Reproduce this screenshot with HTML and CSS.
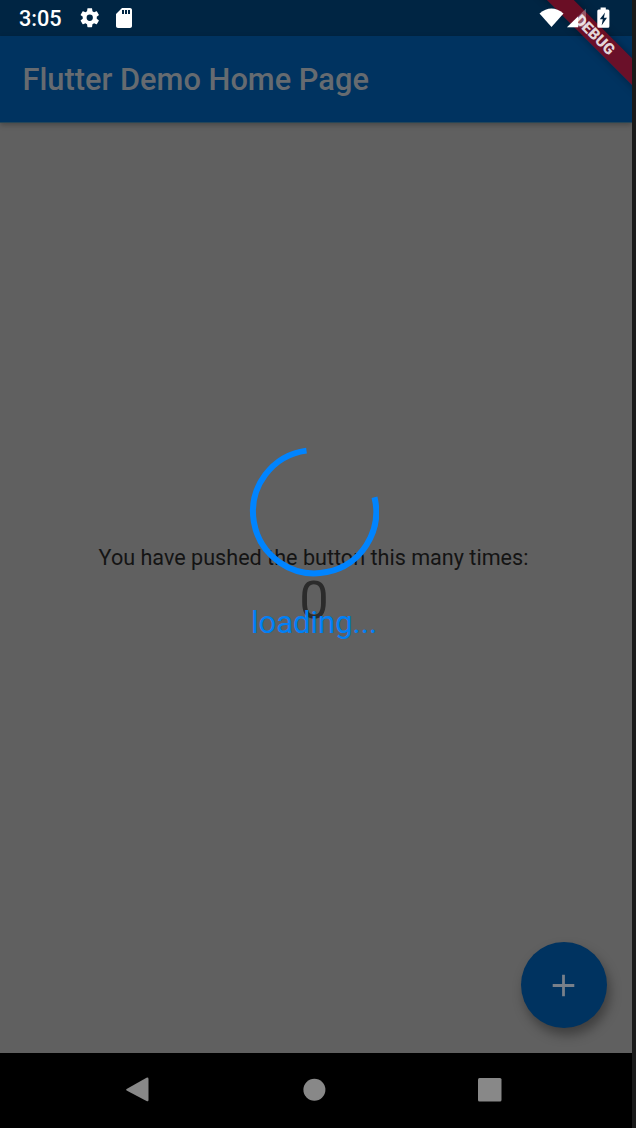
FILE: index.html
```html
<!DOCTYPE html>
<html lang="en">
<head>
<meta charset="utf-8">
<title>Flutter Demo Home Page</title>
<link rel="stylesheet" href="styles.css">
</head>
<body>
<div class="device">
  <div class="status">
    <span class="clock">3:05</span>
    <svg class="gear" viewBox="0 0 24 24"><path d="M19.14 12.94c.04-.3.06-.61.06-.94s-.02-.64-.07-.94l2.03-1.58c.18-.14.23-.41.12-.61l-1.92-3.32c-.12-.22-.37-.29-.59-.22l-2.39.96c-.5-.38-1.03-.7-1.62-.94l-.36-2.54c-.04-.24-.24-.41-.48-.41h-3.84c-.24 0-.43.17-.47.41l-.36 2.54c-.59.24-1.13.57-1.62.94l-2.39-.96c-.22-.08-.47 0-.59.22L2.74 8.87c-.12.21-.08.47.12.61l2.03 1.58c-.05.3-.09.63-.09.94s.02.64.07.94l-2.03 1.58c-.18.14-.23.41-.12.61l1.92 3.32c.12.22.37.29.59.22l2.39-.96c.5.38 1.03.7 1.62.94l.36 2.54c.05.24.24.41.48.41h3.84c.24 0 .44-.17.47-.41l.36-2.54c.59-.24 1.13-.56 1.62-.94l2.39.96c.22.08.47 0 .59-.22l1.92-3.32c.12-.22.07-.47-.12-.61zM12 15.2A3.2 3.2 0 1 1 12 8.800a3.2 3.2 0 0 1 0 6.400z"/></svg>
    <svg class="card" viewBox="0 0 24 24"><path d="M18 2h-8L4.020 8 4 20c0 1.100.9 2 2 2h12c1.100 0 2-.9 2-2V4c0-1.100-.9-2-2-2zm-6 6h-2V4h2zm3 0h-2V4h2zm3 0h-2V4h2z"/></svg>
    <svg class="signals" viewBox="536 0 80 36">
      <path d="M539.500 13.400Q551.500 3.400 563.500 13.400L551.500 27z"/>
      <path class="dim" d="M567 27.200L586 8.500V27.200z"/>
      <path d="M567 27.200L578 16.400V27.200z"/>
      <path fill-rule="evenodd" d="M600.600 9.500V7.500H605.800V9.500H608Q609.400 9.500 609.400 11V26.200Q609.400 27.800 608 27.800H598.800Q597.300 27.800 597.300 26.200V11Q597.300 9.500 598.800 9.500zM605 12.500L599.800 19.300H602.800L601.600 25.500L607 17.800H603.900z"/>
    </svg>
  </div>
  <header class="appbar"><h1>Flutter Demo Home Page</h1></header>
  <main class="content">
    <p class="message">You have pushed the button this many times:</p>
    <p class="count">0</p>
    <button class="fab" aria-label="Increment"><svg viewBox="0 0 24 24"><path d="M19 12.900h-6.100V19h-1.800v-6.100H5v-1.800h6.100V5h1.800v6.100H19z"/></svg></button>
    <div class="loader">
      <svg class="spinner" viewBox="0 0 130 130"><path d="M57.500 3.600A61.600 61.600 0 1 0 125.500 50.300"/></svg>
      <span class="loading">loading...</span>
    </div>
  </main>
  <nav class="navbar">
    <svg viewBox="0 0 26 26"><path d="M1.600 12L21.500 .7Q23.500 0 23.500 2V23Q23.500 25 21.500 24L1.600 13.500Q.5 12.700 1.600 12z"/></svg>
    <svg viewBox="0 0 26 26"><circle cx="13.400" cy="12.700" r="11"/></svg>
    <svg viewBox="0 0 26 26"><rect x="1" y="1" width="23.500" height="23.500" rx="1.500"/></svg>
  </nav>
  <div class="banner"><span>DEBUG</span></div>
</div>
</body>
</html>
```
FILE: styles.css
```css
body {
  margin: 0;
  background: #1a1a1a;
  font-family: Roboto, sans-serif;
}
.device {
  position: relative;
  width: 632px;
  height: 1128px;
  display: flex;
  flex-direction: column;
  overflow: hidden;
  background: #606060;
}
.status {
  height: 36px;
  box-sizing: border-box;
  padding: 0 16px 0 19px;
  display: flex;
  align-items: center;
  background: #002543;
  color: #fff;
  fill: #fff;
}
.clock {
  width: 59px;
  font-size: 21.700px;
  font-weight: 500;
  line-height: 36px;
  padding-top: 1px;
  box-sizing: border-box;
}
.gear { width: 23.500px; height: 23.500px; }
.card { width: 24px; height: 24px; margin-left: 10.500px; }
.signals {
  position: relative;
  z-index: 3;
  width: 80px;
  height: 36px;
  margin-left: auto;
}
.dim { opacity: .3; }
.appbar {
  height: 87px;
  box-sizing: border-box;
  padding: 2px 0 0 22.500px;
  display: flex;
  align-items: center;
  background: #003360;
  border-bottom: 1px solid #264658;
  box-shadow: 0 2px 5px rgba(0, 0, 0, .25);
  z-index: 1;
}
h1 {
  margin: 0;
  font-size: 30.800px;
  line-height: 36px;
  font-weight: 500;
  color: #666b70;
}
.content {
  position: relative;
  height: 930px;
  display: flex;
  flex-direction: column;
  align-items: center;
}
.message, .count { margin: 0; white-space: nowrap; }
.message {
  padding-top: 422px;
  margin-right: 5px;
  font-size: 21.600px;
  line-height: 26px;
  color: #141414;
}
.count {
  margin-top: -1px;
  margin-right: 4px;
  font-size: 52.500px;
  line-height: 60px;
  color: #2b2b2b;
}
.fab {
  position: absolute;
  right: 25.500px;
  bottom: 25px;
  width: 86px;
  height: 86px;
  padding: 0;
  border: 0;
  border-radius: 50%;
  display: grid;
  place-items: center;
  background: #003360;
  box-shadow: 3px 7px 12px rgba(0, 0, 0, .36);
}
.fab svg { width: 37px; height: 37px; fill: #78808a; }
.loader {
  position: absolute;
  top: 324px;
  left: 214px;
  width: 200px;
  display: flex;
  flex-direction: column;
  align-items: center;
  color: #0080f6;
}
.spinner {
  width: 130px;
  height: 130px;
  fill: none;
  stroke: #0084ff;
  stroke-width: 6;
}
.loading {
  margin-top: 28px;
  font-size: 31px;
  line-height: 36px;
}
.navbar {
  height: 75px;
  box-sizing: border-box;
  padding: 0 129px 1px 125px;
  display: flex;
  align-items: center;
  justify-content: space-between;
  background: #000;
}
.navbar svg { width: 26px; height: 26px; fill: #888; }
.banner {
  position: absolute;
  left: 495.500px;
  top: 26px;
  width: 200px;
  height: 18.500px;
  transform: rotate(45deg);
  display: grid;
  place-items: center;
  background: rgba(125, 10, 32, .85);
  box-shadow: 0 0 8px rgba(0, 0, 0, .35);
  color: #e3d5da;
  font-size: 15.400px;
  line-height: 18px;
  font-weight: 900;
  z-index: 2;
}
.banner span { transform: translate(-1px, 1px); }
```
